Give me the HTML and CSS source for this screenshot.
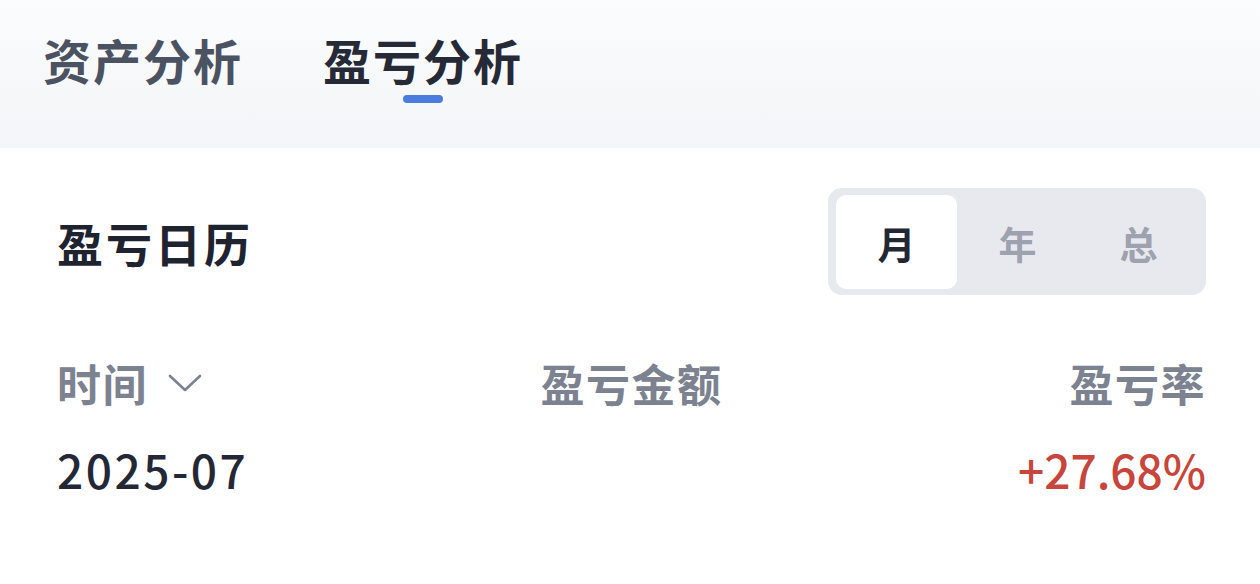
FILE: index.html
```html
<!DOCTYPE html>
<html lang="zh-CN">
<head>
<meta charset="utf-8">
<title>盈亏分析</title>
<link rel="stylesheet" href="styles.css">
</head>
<body>
<header class="tabs">
  <div class="tab">
    <span class="tab-label">资产分析</span>
    <span class="tab-bar"></span>
  </div>
  <div class="tab tab-active">
    <span class="tab-label">盈亏分析</span>
    <span class="tab-bar"></span>
  </div>
</header>
<main class="content">
  <section class="section-head">
    <h2 class="section-title">盈亏日历</h2>
    <div class="segmented">
      <div class="seg seg-active">月</div>
      <div class="seg">年</div>
      <div class="seg">总</div>
    </div>
  </section>
  <div class="table">
    <div class="row row-head">
      <div class="cell cell-left">时间
        <svg class="chev" width="34" height="18" viewBox="0 0 34 18"><polyline points="2,2 17,16 32,2" fill="none" stroke="#7c8290" stroke-width="2.6" stroke-linecap="round" stroke-linejoin="round"/></svg>
      </div>
      <div class="cell cell-center">盈亏金额</div>
      <div class="cell cell-right">盈亏率</div>
    </div>
    <div class="row row-data">
      <div class="cell cell-left num date">2025-07</div>
      <div class="cell cell-center num"></div>
      <div class="cell cell-right num up">+27.68%</div>
    </div>
  </div>
</main>
</body>
</html>
```

FILE: styles.css
```css
* { box-sizing: border-box; }
html, body {
  margin: 0;
  padding: 0;
  background: #ffffff;
  font-family: "Noto Sans CJK SC", "Noto Sans", sans-serif;
  width: 1260px;
  height: 584px;
  overflow: hidden;
}
.tabs {
  height: 148px;
  background: linear-gradient(180deg, #fbfcfd 0%, #f4f5f8 100%);
  display: flex;
  gap: 80px;
  padding: 33px 0 0 43px;
}
.tab {
  display: flex;
  flex-direction: column;
  align-items: center;
}
.tab-label {
  font-size: 48px;
  line-height: 52px;
  font-weight: 700;
  letter-spacing: 2px;
  color: #4b5262;
}
.tab-bar {
  width: 40px;
  height: 8px;
  border-radius: 4px;
  margin-top: 10px;
  background: transparent;
}
.tab-active .tab-label { color: #262a36; }
.tab-active .tab-bar { background: #4a7ddc; }

.content {
  padding: 40px 54px 0 57px;
}
.section-head {
  display: flex;
  justify-content: space-between;
  align-items: center;
  height: 107px;
}
.section-title {
  margin: 0;
  font-size: 46px;
  font-weight: 700;
  letter-spacing: 3px;
  color: #1f2330;
}
.segmented {
  display: flex;
  width: 378px;
  height: 107px;
  padding: 7px 7px 6px 8px;
  background: #e8e9ee;
  border-radius: 14px;
}
.seg {
  flex: 1;
  display: flex;
  align-items: center;
  justify-content: center;
  font-size: 38px;
  font-weight: 700;
  color: #9ea2ae;
  border-radius: 10px;
}
.seg-active {
  background: #ffffff;
  color: #232733;
}
.table {
  margin-top: 56px;
}
.row {
  display: grid;
  grid-template-columns: 1fr 1fr 1fr;
  align-items: center;
}
.row-head { height: 60px; }
.row-data { height: 60px; margin-top: 25px; }
.cell {
  display: flex;
  align-items: center;
}
.cell-center { justify-content: center; }
.cell-right { justify-content: flex-end; }
.row-head .cell {
  font-size: 44px;
  font-weight: 700;
  letter-spacing: 1.5px;
  color: #7c8290;
}
.chev { margin-left: 20px; }
.num {
  font-size: 46px;
  font-weight: 500;
  letter-spacing: 0;
  color: #242836;
}
.date { letter-spacing: 2.5px; }
.up { color: #c8453b; }
```
